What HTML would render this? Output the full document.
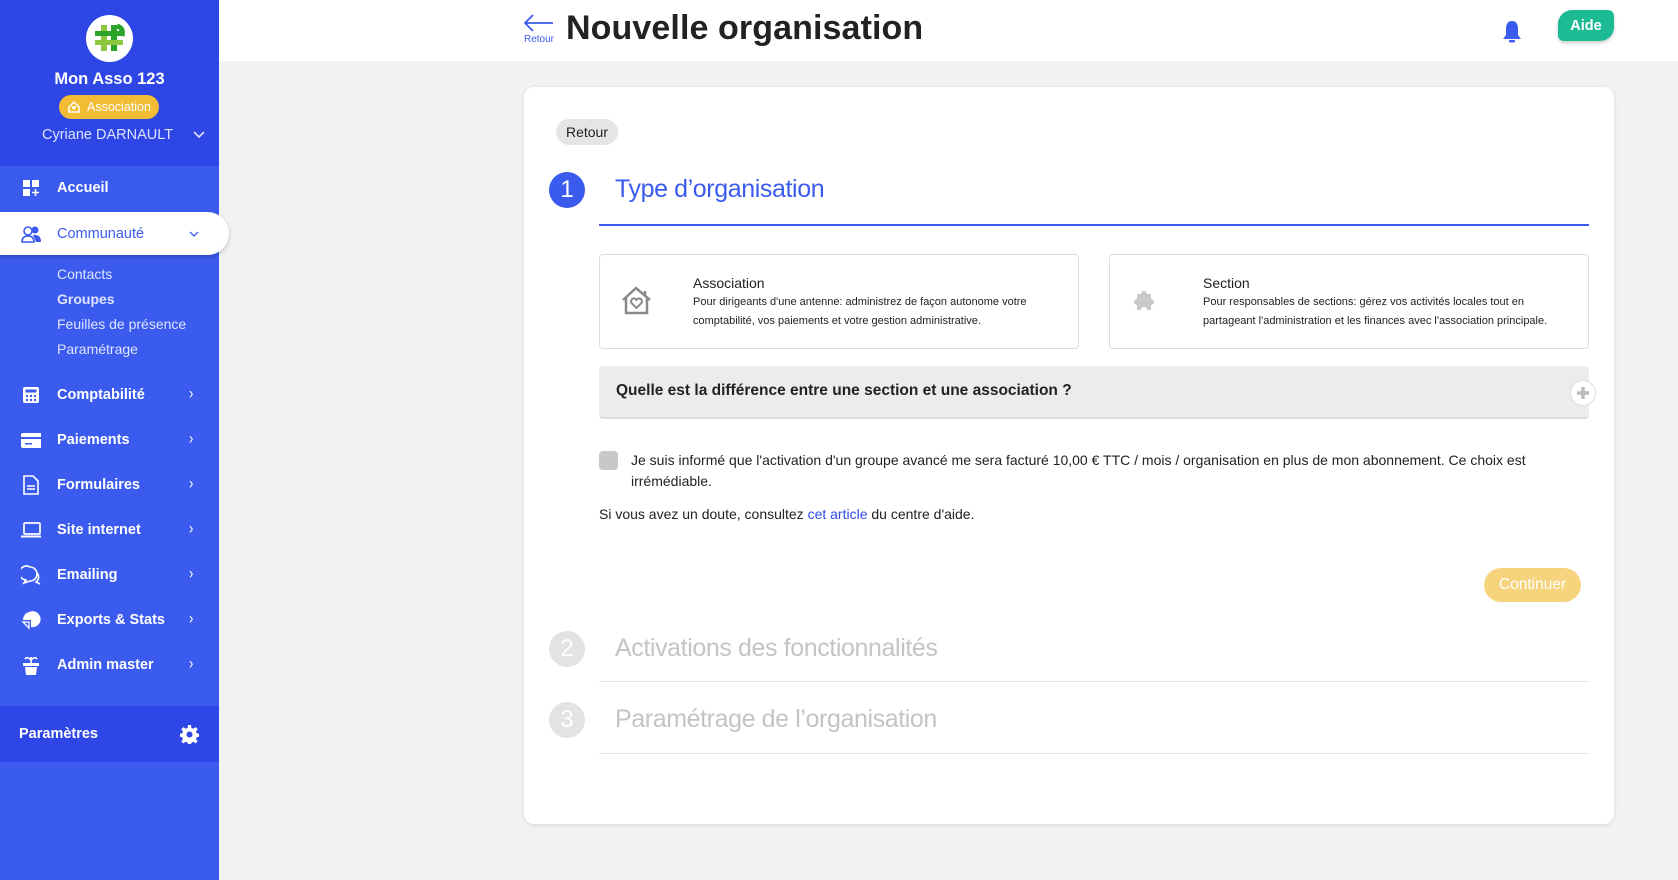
<!DOCTYPE html>
<html><head><meta charset="utf-8"><style>
*{box-sizing:border-box;margin:0;padding:0}
body{width:1678px;height:880px;overflow:hidden;background:#f2f2f2;font-family:"Liberation Sans",Arial,sans-serif;position:relative;color:#222}
.abs{position:absolute}
#sb{left:0;top:0;width:219px;height:880px;background:#3a5bee}
#sbtop{left:0;top:0;width:219px;height:166px;background:#2e46e6}
.mi{position:absolute;left:0;width:219px;height:30px;color:#fff;font-size:14.5px;font-weight:bold;display:flex;align-items:center}
.mi .ic{position:absolute;left:21px;width:20px;height:20px;display:flex;align-items:center;justify-content:center}
.mi .tx{position:absolute;left:57px}
.mi .ch{position:absolute;left:189px;top:5px;font-weight:normal;font-size:13px;transform:scaleY(1.3)}
.sub{position:absolute;left:57px;color:#dfe4ff;font-size:14px}
#hdr{left:219px;top:0;width:1459px;height:61px;background:#fff}
#card{left:524px;top:87px;width:1090px;height:737px;background:#fff;border-radius:10px;box-shadow:0 1px 4px rgba(0,0,0,.12)}
.opt{position:absolute;top:254px;width:480px;height:95px;border:1px solid #ddd;border-radius:4px;background:#fff}
.opt .t{position:absolute;left:93px;top:20px;font-size:14px;color:#222}
.opt .d{position:absolute;left:93px;top:38px;font-size:11px;line-height:19px;color:#222;width:370px}
.circ{position:absolute;width:36px;height:36px;border-radius:50%;color:#fff;font-size:22px;display:flex;align-items:center;justify-content:center}
.st{position:absolute;left:615px;font-size:25px;letter-spacing:-0.4px}
</style></head><body>
<div id="sb" class="abs"></div>
<div id="sbtop" class="abs"></div>
<div class="abs" style="left:86px;top:15px;width:47px;height:47px;border-radius:50%;background:#fff"></div>
<svg class="abs" style="left:91px;top:20px" width="37" height="37" viewBox="0 0 37 37">
<rect x="10" y="5" width="6" height="26" fill="#8cc63f"/><rect x="20" y="5" width="6" height="26" fill="#2aa52a"/>
<rect x="4" y="11" width="28" height="5" fill="#2aa52a"/><rect x="4" y="20" width="28" height="5" fill="#8cc63f"/>
<path d="M26 6 Q33 8 31 16" stroke="#2aa52a" stroke-width="5" fill="none"/></svg>
<div class="abs" style="left:0;top:70px;width:219px;text-align:center;color:#fff;font-weight:bold;font-size:16.5px">Mon Asso 123</div>
<div class="abs" style="left:59px;top:95px;width:100px;height:24px;border-radius:12px;background:#f2bc34;color:#fff;font-size:12.5px;display:flex;align-items:center;padding-left:8px">
<svg width="14" height="14" viewBox="0 0 14 14" style="margin-right:6px"><path d="M2 7 L7 2 L12 7 V12 H2 Z" fill="none" stroke="#fff" stroke-width="1.5"/><path d="M7 10 L5 8 A1.2 1.2 0 0 1 7 6.6 A1.2 1.2 0 0 1 9 8 Z" fill="#fff"/></svg>Association</div>
<div class="abs" style="left:42px;top:127px;color:#dde2ff;font-size:14.5px">Cyriane DARNAULT</div>
<svg class="abs" style="left:193px;top:131px" width="12" height="8"><path d="M1 1 L6 6 L11 1" stroke="#dde2ff" stroke-width="1.6" fill="none"/></svg>

<div class="mi" style="top:173px"><span class="ic"><svg width="18" height="18"><rect x="1" y="1" width="7" height="7" fill="#fff"/><rect x="10" y="1" width="7" height="7" fill="#fff"/><rect x="1" y="10" width="7" height="7" fill="#fff"/><path d="M13.5 10 V17 M10 13.5 H17" stroke="#fff" stroke-width="1.6"/></svg></span><span class="tx">Accueil</span></div>
<div class="abs" style="left:0;top:212px;width:229px;height:43px;background:#fff;border-radius:0 22px 22px 0;box-shadow:0 2px 5px rgba(0,0,0,.2)"></div>
<div class="mi" style="top:219px;color:#3a5bee;font-weight:normal"><span class="ic"><svg width="22" height="18"><circle cx="7" cy="6" r="4" fill="none" stroke="#3a5bee" stroke-width="1.6"/><path d="M1 17 Q1 11 7 11 Q13 11 13 17 Z" fill="none" stroke="#3a5bee" stroke-width="1.6"/><circle cx="14" cy="5" r="3.5" fill="#3a5bee"/><path d="M12 10 Q20 9 20 17 H15" fill="#3a5bee"/></svg></span><span class="tx">Communauté</span></div>
<svg class="abs" style="left:189px;top:231px" width="10" height="6"><path d="M1 1 L5 5 L9 1" stroke="#3a5bee" stroke-width="1.3" fill="none"/></svg>
<div class="sub" style="top:266px">Contacts</div>
<div class="sub" style="top:291px;font-weight:bold">Groupes</div>
<div class="sub" style="top:316px">Feuilles de présence</div>
<div class="sub" style="top:341px">Paramétrage</div>

<div class="mi" style="top:380px"><span class="ic"><svg width="18" height="18"><rect x="1" y="1" width="16" height="16" rx="2" fill="#fff"/><rect x="3.5" y="3.5" width="11" height="3" fill="#3a5bee"/><circle cx="5" cy="10" r="1.2" fill="#3a5bee"/><circle cx="9" cy="10" r="1.2" fill="#3a5bee"/><circle cx="13" cy="10" r="1.2" fill="#3a5bee"/><circle cx="5" cy="14" r="1.2" fill="#3a5bee"/><circle cx="9" cy="14" r="1.2" fill="#3a5bee"/><circle cx="13" cy="14" r="1.2" fill="#3a5bee"/></svg></span><span class="tx">Comptabilité</span><span class="ch">›</span></div>
<div class="mi" style="top:425px"><span class="ic"><svg width="24" height="18"><rect x="0" y="2" width="24" height="15" rx="2" fill="#fff"/><rect x="0" y="6" width="24" height="2" fill="#3a5bee"/><rect x="4" y="12" width="7" height="1.5" fill="#3a5bee"/></svg></span><span class="tx">Paiements</span><span class="ch">›</span></div>
<div class="mi" style="top:470px"><span class="ic"><svg width="16" height="20"><path d="M1 1 H10 L15 6 V19 H1 Z" fill="none" stroke="#fff" stroke-width="1.6"/><path d="M4 11 H12 M4 14 H12" stroke="#fff" stroke-width="1.5"/></svg></span><span class="tx">Formulaires</span><span class="ch">›</span></div>
<div class="mi" style="top:515px"><span class="ic"><svg width="22" height="18"><rect x="3" y="2" width="16" height="11" rx="1" fill="none" stroke="#fff" stroke-width="1.7"/><path d="M0 15.5 H22" stroke="#fff" stroke-width="2"/></svg></span><span class="tx">Site internet</span><span class="ch">›</span></div>
<div class="mi" style="top:560px"><span class="ic"><svg width="20" height="20"><path d="M9 2 A7 7 0 1 0 5 15 L3 18 L9 16 A7 7 0 0 0 9 2 Z" fill="none" stroke="#fff" stroke-width="1.6"/><path d="M16 8 A6 6 0 0 1 15 17 L19 19" fill="none" stroke="#fff" stroke-width="1.6"/></svg></span><span class="tx">Emailing</span><span class="ch">›</span></div>
<div class="mi" style="top:605px"><span class="ic"><svg width="20" height="20"><path d="M8 2 A8 8 0 1 1 10 17 V10 H2 A8 8 0 0 1 8 2 Z" fill="#fff"/><path d="M2 12 H8 V18 Z" fill="none" stroke="#fff" stroke-width="1.3"/></svg></span><span class="tx">Exports &amp; Stats</span><span class="ch">›</span></div>
<div class="mi" style="top:650px"><span class="ic"><svg width="18" height="20"><path d="M9 2 V8 M9 5 Q5 1 3 4 M9 5 Q13 1 15 4" stroke="#fff" stroke-width="1.6" fill="none"/><rect x="1" y="8" width="16" height="3" fill="#fff"/><path d="M3 12 H15 L14 20 H4 Z" fill="#fff"/></svg></span><span class="tx">Admin master</span><span class="ch">›</span></div>

<div class="abs" style="left:0;top:706px;width:219px;height:56px;background:#2e46e6"></div>
<div class="abs" style="left:19px;top:726px;color:#fff;font-size:14.5px;font-weight:bold">Paramètres</div>
<svg class="abs" style="left:180px;top:725px" width="19" height="19" viewBox="0 0 20 20"><path fill="#fff" d="M8.5 0h3l.5 3 2 1 2.5-1.8 2.1 2.1-1.8 2.5 1 2 3 .5v3l-3 .5-1 2 1.8 2.5-2.1 2.1-2.5-1.8-2 1-.5 3h-3l-.5-3-2-1-2.5 1.8-2.1-2.1 1.8-2.5-1-2-3-.5v-3l3-.5 1-2-1.8-2.5 2.1-2.1 2.5 1.8 2-1z"/><circle cx="10" cy="10" r="3.2" fill="#2e46e6"/></svg>

<div id="hdr" class="abs"></div>
<svg class="abs" style="left:524px;top:14px" width="30" height="18"><path d="M1 9 H29 M9 1 L1 9 L9 17" stroke="#3a5bee" stroke-width="1.8" fill="none"/></svg>
<div class="abs" style="left:524px;top:34px;color:#3a5bee;font-size:10px">Retour</div>
<div class="abs" style="left:566px;top:9px;font-size:34px;font-weight:bold;color:#222;letter-spacing:0.1px">Nouvelle organisation</div>
<svg class="abs" style="left:1502px;top:20px" width="20" height="23" viewBox="0 0 20 23"><path d="M10 1 Q4 1 4 9 V15 L1 19 H19 L16 15 V9 Q16 1 10 1 Z" fill="#3a5bee"/><rect x="7" y="20" width="6" height="2.5" rx="1" fill="#3a5bee"/></svg>
<div class="abs" style="left:1558px;top:10px;width:56px;height:31px;background:#1dbb94;border-radius:14px 6px 14px 6px;box-shadow:0 2px 3px rgba(0,0,0,.2);color:#fff;font-size:14.5px;font-weight:bold;display:flex;align-items:center;justify-content:center">Aide</div>

<div id="card" class="abs"></div>
<div class="abs" style="left:556px;top:119px;width:62px;height:26px;border-radius:13px;background:#e5e5e5;font-size:14px;display:flex;align-items:center;justify-content:center;color:#222">Retour</div>
<div class="circ" style="left:549px;top:172px;background:#3a5bee;font-size:24px">1</div>
<div class="st" style="top:175px;color:#3a5bee">Type d’organisation</div>
<div class="abs" style="left:599px;top:224px;width:990px;height:1.5px;background:#3a5bee"></div>

<div class="opt" style="left:599px"><svg style="position:absolute;left:20px;top:30px" width="33" height="30" viewBox="0 0 33 30"><path d="M3 15 L16 3 L30 15 M6 12 V28 H27 V12 M25 6 V10" stroke="#8a8a8a" stroke-width="2.5" fill="none"/><path d="M16.5 23 L11.5 18 A2.8 2.8 0 0 1 16.5 14.8 A2.8 2.8 0 0 1 21.5 18 Z" fill="none" stroke="#8a8a8a" stroke-width="2"/></svg>
<div class="t">Association</div><div class="d">Pour dirigeants d'une antenne: administrez de façon autonome votre comptabilité, vos paiements et votre gestion administrative.</div></div>
<div class="opt" style="left:1109px"><svg style="position:absolute;left:19px;top:36px" width="32" height="22" viewBox="0 0 32 22"><path d="M8 3 H12 A3 3 0 1 1 18 3 H22 V8 A3 3 0 1 1 22 14 V19 H18 A3 3 0 1 0 12 19 H8 V14 A3 3 0 1 1 8 8 Z" fill="#c8c8c8"/></svg>
<div class="t">Section</div><div class="d">Pour responsables de sections: gérez vos activités locales tout en partageant l'administration et les finances avec l'association principale.</div></div>

<div class="abs" style="left:599px;top:366px;width:990px;height:53px;background:#ececee;border-radius:4px;border-bottom:2px solid #ddd"></div>
<div class="abs" style="left:616px;top:382px;font-size:15.5px;font-weight:bold;color:#222">Quelle est la différence entre une section et une association ?</div>
<div class="abs" style="left:1570px;top:380px;width:26px;height:26px;border-radius:50%;background:#fff;border:1px solid #ddd;display:flex;align-items:center;justify-content:center"><svg width="14" height="14"><path d="M7 1 V13 M1 7 H13" stroke="#bbb" stroke-width="3.5"/></svg></div>

<div class="abs" style="left:599px;top:451px;width:19px;height:19px;border-radius:4px;background:#c8c8c6"></div>
<div class="abs" style="left:631px;top:450px;width:950px;font-size:14px;line-height:21px;color:#222">Je suis informé que l'activation d'un groupe avancé me sera facturé 10,00 € TTC / mois / organisation en plus de mon abonnement. Ce choix est irrémédiable.</div>
<div class="abs" style="left:599px;top:506px;font-size:14px;color:#222">Si vous avez un doute, consultez <span style="color:#2f4be8">cet article</span> du centre d'aide.</div>

<div class="abs" style="left:1484px;top:568px;width:97px;height:34px;border-radius:17px;background:#f6d47e;color:#fff;font-size:15.5px;display:flex;align-items:center;justify-content:center">Continuer</div>

<div class="circ" style="left:549px;top:631px;background:#e3e3e3;font-size:24px">2</div>
<div class="st" style="top:634px;color:#c4c4c4">Activations des fonctionnalités</div>
<div class="abs" style="left:599px;top:681px;width:990px;height:1px;background:#e2e2e2"></div>
<div class="circ" style="left:549px;top:702px;background:#e3e3e3;font-size:24px">3</div>
<div class="st" style="top:705px;color:#c4c4c4">Paramétrage de l’organisation</div>
<div class="abs" style="left:599px;top:753px;width:990px;height:1px;background:#e2e2e2"></div>
</body></html>
